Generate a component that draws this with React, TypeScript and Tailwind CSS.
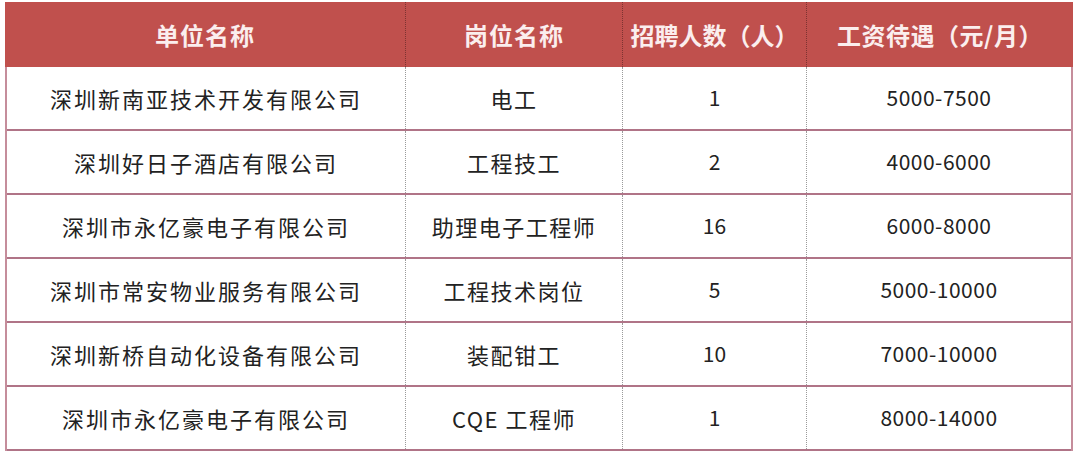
import React from "react";

const rows = [
  ["深圳新南亚技术开发有限公司", "电工", "1", "5000-7500"],
  ["深圳好日子酒店有限公司", "工程技工", "2", "4000-6000"],
  ["深圳市永亿豪电子有限公司", "助理电子工程师", "16", "6000-8000"],
  ["深圳市常安物业服务有限公司", "工程技术岗位", "5", "5000-10000"],
  ["深圳新桥自动化设备有限公司", "装配钳工", "10", "7000-10000"],
  ["深圳市永亿豪电子有限公司", "CQE 工程师", "1", "8000-14000"],
];

const font = { fontFamily: '"Noto Sans CJK SC", "Noto Sans", sans-serif' };

export default function App() {
  return (
    <div className="w-[1080px] h-[459px] bg-white pt-[2px] pl-[5px]" style={font}>
      <div className="w-[1068px]">
        <div className="flex h-[65px] bg-[#c0504d] text-[#fbeeee] text-[24px] font-bold">
          <div className="w-[400px] flex items-center justify-center tracking-[1px]">单位名称</div>
          <div className="w-[217px] flex items-center justify-center border-l border-dotted border-[#7d3331] tracking-[1px]">岗位名称</div>
          <div className="w-[184px] flex items-center justify-center border-l border-dotted border-[#7d3331]">招聘人数（人）</div>
          <div className="flex-1 flex items-center justify-center border-l border-dotted border-[#7d3331] tracking-[0.5px]">工资待遇（元/月）</div>
        </div>
        <div className="border-x-2 border-[#c58d9b]">
          {rows.map((r, i) => (
            <div key={i} className="flex h-[64px] border-b-2 border-[#b07487] text-[#222] text-[21px]">
              <div className="w-[398px] flex items-center justify-center tracking-[2px] text-[22px]">{r[0]}</div>
              <div className="w-[217px] flex items-center justify-center border-l border-dotted border-[#9a9a9a] tracking-[1.5px] text-[22px]">{r[1]}</div>
              <div className="w-[184px] flex items-center justify-center border-l border-dotted border-[#9a9a9a]">{r[2]}</div>
              <div className="flex-1 flex items-center justify-center border-l border-dotted border-[#9a9a9a] tracking-[0.5px]">{r[3]}</div>
            </div>
          ))}
        </div>
      </div>
    </div>
  );
}
